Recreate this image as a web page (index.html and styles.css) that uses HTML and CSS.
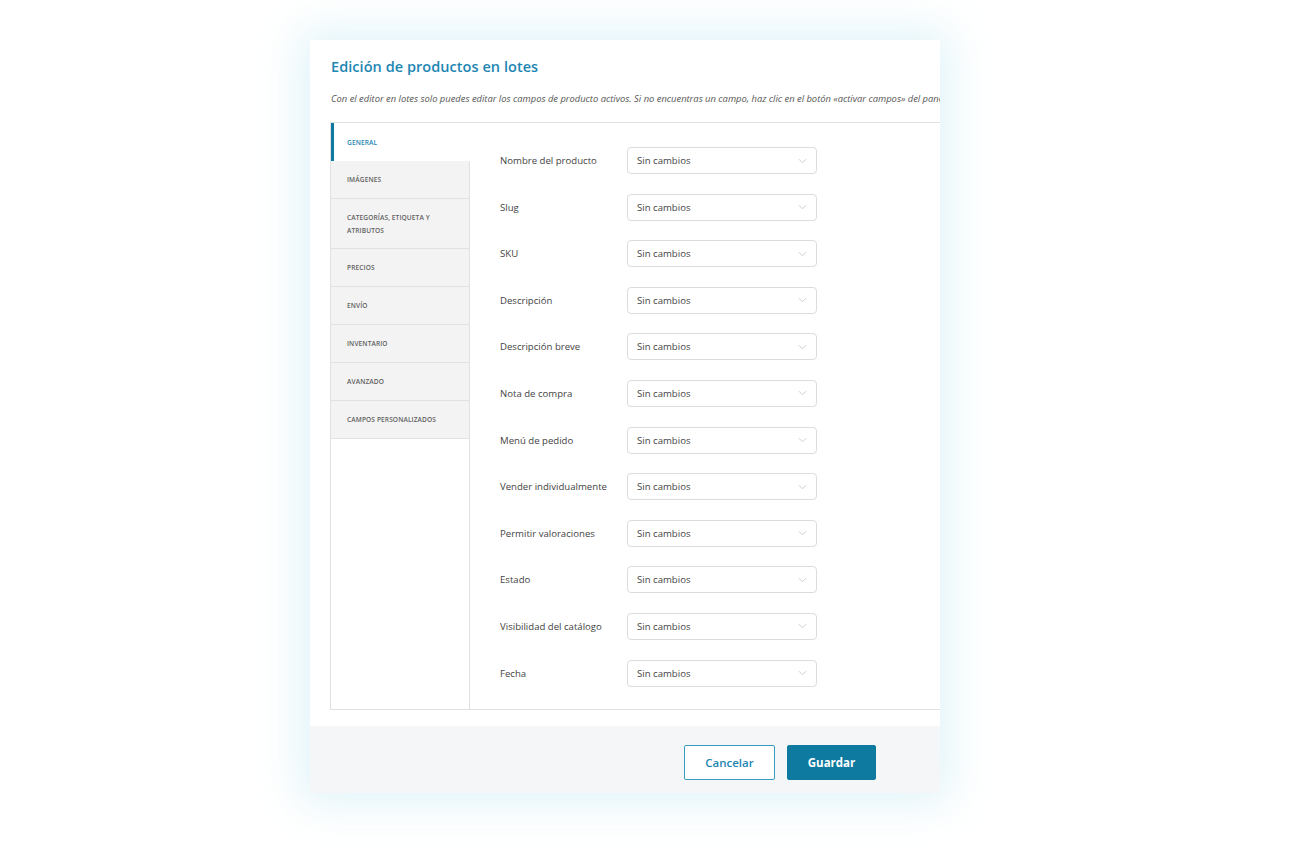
FILE: index.html
```html
<!DOCTYPE html>
<html lang="es">
<head>
<meta charset="utf-8">
<title>Edición de productos en lotes</title>
<link rel="stylesheet" href="styles.css">
</head>
<body>
<div class="stage">
  <div class="modal">
    <div class="modal-head">
      <h1 class="title">Edición de productos en lotes</h1>
      <p class="desc">Con el editor en lotes solo puedes editar los campos de producto activos. Si no encuentras un campo, haz clic en el botón «activar campos» del panel de productos.</p>
    </div>
    <div class="panel">
      <ul class="tabs">
        <li class="tab active">General</li>
        <li class="tab">Imágenes</li>
        <li class="tab tall">Categorías, etiqueta y atributos</li>
        <li class="tab">Precios</li>
        <li class="tab">Envío</li>
        <li class="tab">Inventario</li>
        <li class="tab">Avanzado</li>
        <li class="tab">Campos personalizados</li>
      </ul>
      <div class="fields">
        <div class="row"><span class="label">Nombre del producto</span><div class="select"><span>Sin cambios</span><svg class="chev" viewBox="0 0 10 6"><path d="M1 1l4 4 4-4"/></svg></div></div>
        <div class="row"><span class="label">Slug</span><div class="select"><span>Sin cambios</span><svg class="chev" viewBox="0 0 10 6"><path d="M1 1l4 4 4-4"/></svg></div></div>
        <div class="row"><span class="label">SKU</span><div class="select"><span>Sin cambios</span><svg class="chev" viewBox="0 0 10 6"><path d="M1 1l4 4 4-4"/></svg></div></div>
        <div class="row"><span class="label">Descripción</span><div class="select"><span>Sin cambios</span><svg class="chev" viewBox="0 0 10 6"><path d="M1 1l4 4 4-4"/></svg></div></div>
        <div class="row"><span class="label">Descripción breve</span><div class="select"><span>Sin cambios</span><svg class="chev" viewBox="0 0 10 6"><path d="M1 1l4 4 4-4"/></svg></div></div>
        <div class="row"><span class="label">Nota de compra</span><div class="select"><span>Sin cambios</span><svg class="chev" viewBox="0 0 10 6"><path d="M1 1l4 4 4-4"/></svg></div></div>
        <div class="row"><span class="label">Menú de pedido</span><div class="select"><span>Sin cambios</span><svg class="chev" viewBox="0 0 10 6"><path d="M1 1l4 4 4-4"/></svg></div></div>
        <div class="row"><span class="label">Vender individualmente</span><div class="select"><span>Sin cambios</span><svg class="chev" viewBox="0 0 10 6"><path d="M1 1l4 4 4-4"/></svg></div></div>
        <div class="row"><span class="label">Permitir valoraciones</span><div class="select"><span>Sin cambios</span><svg class="chev" viewBox="0 0 10 6"><path d="M1 1l4 4 4-4"/></svg></div></div>
        <div class="row"><span class="label">Estado</span><div class="select"><span>Sin cambios</span><svg class="chev" viewBox="0 0 10 6"><path d="M1 1l4 4 4-4"/></svg></div></div>
        <div class="row"><span class="label">Visibilidad del catálogo</span><div class="select"><span>Sin cambios</span><svg class="chev" viewBox="0 0 10 6"><path d="M1 1l4 4 4-4"/></svg></div></div>
        <div class="row"><span class="label">Fecha</span><div class="select"><span>Sin cambios</span><svg class="chev" viewBox="0 0 10 6"><path d="M1 1l4 4 4-4"/></svg></div></div>
      </div>
    </div>
    <div class="footer">
      <button class="btn btn-outline">Cancelar</button>
      <button class="btn btn-primary">Guardar</button>
    </div>
  </div>
</div>
</body>
</html>
```
FILE: styles.css
```css
* { box-sizing: border-box; }
html, body { margin: 0; padding: 0; background: #ffffff; }
body { font-family: "Open Sans", "Noto Sans", sans-serif; color: #444; }

.stage {
  padding: 40px 0 0 310px;
  height: 850px;
}

.modal {
  width: 630px;
  height: 753px;
  background: #fff;
  overflow: hidden;
  box-shadow: 0 0 40px 8px rgba(150, 215, 235, 0.3);
  display: flex;
  flex-direction: column;
}

.modal-head {
  padding: 17px 0 0 21px;
  white-space: nowrap;
}

.title {
  margin: 0;
  font-size: 14.5px;
  font-weight: 600;
  color: #1d86b3;
  line-height: 20px;
  letter-spacing: 0.05px;
}

.desc {
  margin: 15px 0 0;
  font-size: 9.4px;
  font-style: italic;
  color: #555;
  line-height: 14px;
  overflow: hidden;
}

.panel {
  margin: 16px 0 0 20px;
  width: 700px;
  height: 588px;
  border: 1px solid #e1e1e1;
  display: flex;
  flex-shrink: 0;
}

.tabs {
  list-style: none;
  margin: 0;
  padding: 0;
  width: 139px;
  border-right: 1px solid #e1e1e1;
  flex-shrink: 0;
}

.tab {
  height: 38px;
  display: flex;
  align-items: center;
  padding: 0 20px 0 16px;
  background: #f3f3f3;
  border-bottom: 1px solid #e1e1e1;
  font-size: 6.6px;
  font-weight: 600;
  text-transform: uppercase;
  color: #5f5f5f;
  line-height: 13px;
  letter-spacing: 0.1px;
}

.tab.tall { height: 50px; }

.tab.active {
  background: #fff;
  color: #1d86b3;
  border-left: 3px solid #0e7aa0;
  padding-left: 13px;
  margin-right: -1px;
  border-bottom: 0;
}

.fields {
  padding: 24px 0 0 30px;
  display: flex;
  flex-direction: column;
  gap: 19.6px;
}

.row {
  display: flex;
  align-items: center;
  height: 27px;
}

.label {
  width: 127px;
  font-size: 9.6px;
  color: #444;
  white-space: nowrap;
}

.select {
  width: 190px;
  height: 27px;
  border: 1px solid #dcdcdc;
  border-radius: 4px;
  display: flex;
  align-items: center;
  justify-content: space-between;
  padding: 0 9px 0 9px;
  font-size: 9.6px;
  color: #444;
}

.chev {
  width: 9px;
  height: 6px;
  fill: none;
  stroke: #c8c8c8;
  stroke-width: 1;
}

.footer {
  margin-top: 16px;
  flex: 1;
  background: #f5f6f7;
  display: flex;
  justify-content: flex-end;
  align-items: flex-start;
  gap: 12px;
  padding: 19px 64px 0 0;
}

.btn {
  height: 35px;
  border-radius: 2px;
  font-family: "Open Sans", "Noto Sans", sans-serif;
  font-size: 11.5px;
  font-weight: 600;
  cursor: pointer;
}

.btn-outline {
  width: 91px;
  background: #fff;
  color: #1d86b3;
  border: 1px solid #3a9ac0;
}

.btn-primary {
  width: 89px;
  background: #0e7aa0;
  color: #fff;
  border: 1px solid #0e7aa0;
  font-weight: 700;
}
```
